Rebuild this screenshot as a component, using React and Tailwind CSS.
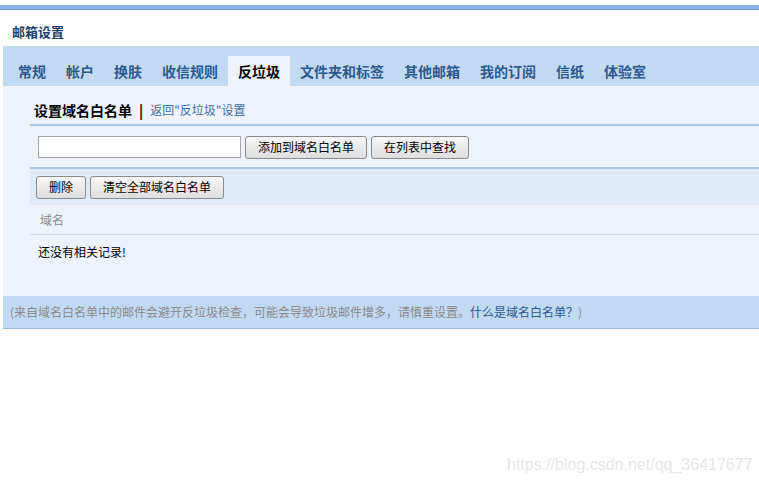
const tabs = ["常规", "帐户", "换肤", "收信规则", "反垃圾", "文件夹和标签", "其他邮箱", "我的订阅", "信纸", "体验室"];

const Btn = ({ children, className = "" }) => (
    <button className={`h-[23px] px-[12px] border border-[#8a8a8a] rounded-[3px] bg-gradient-to-b from-[#f6f6f6] to-[#dedede] text-[12px] text-black leading-none ${className}`}>
        {children}
    </button>
);

export default function App() {
    return (
        <div className="relative w-full h-[482px] bg-white overflow-hidden font-['Noto_Sans_CJK_SC','Noto_Sans',sans-serif] text-[12px]">
            {/* top strip */}
            <div className="mt-[5px] h-[5px] bg-[#8db4e6] border-b border-[#6894cc]" />

            <div className="h-[36px] flex items-center pt-[7px] pl-[12px] text-[13px] font-bold text-[#1d3f6a]">邮箱设置</div>

            <div className="ml-[3px]">
                {/* tabs */}
                <div className="h-[40px] bg-[#c1d9f1] flex items-end pl-[5px]">
                    {tabs.map((t) => (
                        <div
                            key={t}
                            className={`h-[30px] px-[10px] flex items-center text-[14px] font-bold ${t === "反垃圾" ? "bg-[#eef3fb] text-black" : "text-[#2c5a8e]"}`}
                        >
                            {t}
                        </div>
                    ))}
                </div>

                {/* content */}
                <div className="bg-[#eef3fb] h-[210px] pl-[27px]">
                    <div className="h-[40px] flex items-center pt-[10px] border-b-2 border-[#a8c6e6]">
                        <span className="pl-[4px] text-[14px] font-bold text-black">设置域名白名单</span>
                        <span className="px-[7px] text-[14px] font-bold text-black">|</span>
                        <span className="text-[12px] text-[#3d6ea6]">返回"反垃圾"设置</span>
                    </div>

                    <div className="h-[41px] flex items-center gap-[4px] pl-[8px] pt-[1px]">
                        <input className="w-[203px] h-[22px] border border-[#a5a5a5] bg-white" />
                        <Btn>添加到域名白名单</Btn>
                        <Btn>在列表中查找</Btn>
                    </div>

                    <div className="h-[38px] bg-[#dfeaf7] border-t-2 border-[#a8c6e6] flex items-center gap-[4px] pl-[6px]">
                        <Btn>删除</Btn>
                        <Btn>清空全部域名白名单</Btn>
                    </div>

                    <div className="h-[30px] flex items-center pl-[10px] border-b border-[#cfd9e4] text-[#8a8a8a]">域名</div>

                    <div className="h-[33px] flex items-center pl-[8px] text-black">还没有相关记录!</div>
                </div>

                {/* footer */}
                <div className="h-[33px] bg-[#c1d9f1] border-b border-[#9dbce0] flex items-center pl-[7px] text-[#8a8a8a]">
                    (来自域名白名单中的邮件会避开反垃圾检查，可能会导致垃圾邮件增多，请慎重设置。
                    <span className="text-[#2c5a8e]">什么是域名白名单？</span>)
                </div>
            </div>

            <div className="absolute left-[507px] top-[453px] text-[16px] text-[#e6e6e6] font-['Liberation_Sans',sans-serif]">
                https://blog.csdn.net/qq_36417677
            </div>
        </div>
    );
}
